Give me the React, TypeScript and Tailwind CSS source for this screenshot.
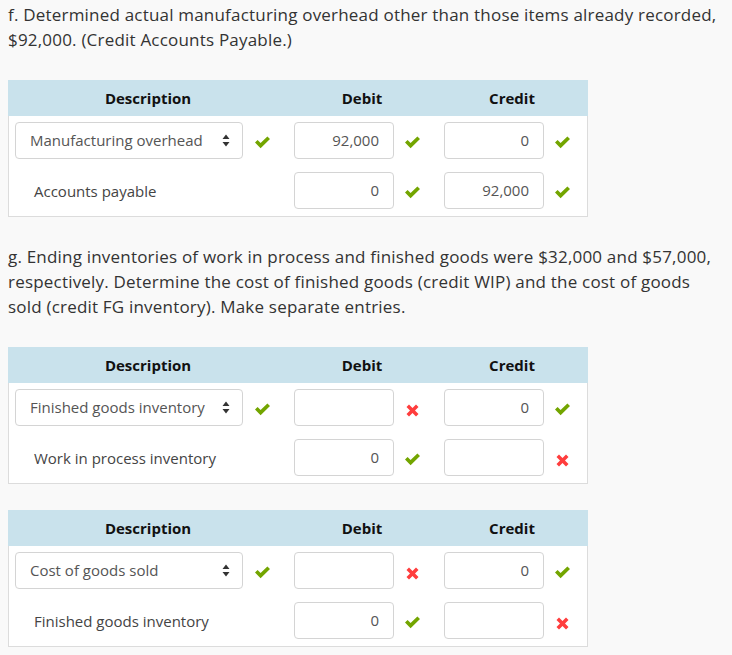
import React from "react";

const Check = () => (
  <svg width="17" height="13" viewBox="0 0 17 13" className="mt-[3px] shrink-0">
    <path d="M1 6.5 L3.6 4 L6.6 7 L13.4 0.5 L16 3 L6.6 12.2 Z" fill="#73a500" />
  </svg>
);

const Cross = () => (
  <svg width="13" height="13" viewBox="0 0 13 13" className="mt-[6px] shrink-0">
    <path
      d="M0.5 3 L3 0.5 L6.5 4 L10 0.5 L12.5 3 L9 6.5 L12.5 10 L10 12.5 L6.5 9 L3 12.5 L0.5 10 L4 6.5 Z"
      fill="#ff3d3d"
    />
  </svg>
);

const Mark = ({ ok }: { ok: boolean }) => (ok ? <Check /> : <Cross />);

const Amount = ({ value, ok }: { value: string; ok: boolean }) => (
  <div className="flex items-center pl-[7px]">
    <div className="w-[100px] h-[37px] border border-[#d4d4d4] rounded-[4px] bg-white flex items-center justify-end pr-[14px] text-[15px] text-[#555]">
      {value}
    </div>
    <div className="w-[17px] ml-[10px] flex justify-center">
      <Mark ok={ok} />
    </div>
  </div>
);

type Row = {
  desc: string;
  select: boolean;
  descOk?: boolean;
  debit: string;
  debitOk: boolean;
  credit: string;
  creditOk: boolean;
};

const Table = ({ rows }: { rows: Row[] }) => (
  <div className="w-[580px] bg-white border border-[#dcdcdc] border-t-0">
    <div className="grid grid-cols-[278px_150px_150px] h-[36px] bg-[#c9e2ec] items-center text-[15px] font-bold text-[#111] -mx-px px-px">
      <div className="text-center">Description</div>
      <div className="text-center">Debit</div>
      <div className="text-center">Credit</div>
    </div>
    <div className="flex flex-col gap-[13px] pt-[6px] pb-[7px]">
      {rows.map((r, i) => (
        <div key={i} className="grid grid-cols-[278px_150px_150px] h-[37px]">
          <div className="flex items-center pl-[6px]">
            {r.select ? (
              <>
                <div className="w-[228px] h-[37px] border border-[#d4d4d4] rounded-[4px] bg-white flex items-center justify-between pl-[14px] pr-[12px] text-[15px] text-[#555]">
                  <span>{r.desc}</span>
                  <svg width="8" height="13" viewBox="0 0 8 13">
                    <path d="M4 0.5 L7.5 5 L0.5 5 Z M4 12.5 L7.5 8 L0.5 8 Z" fill="#333" />
                  </svg>
                </div>
                <div className="ml-[11px]">
                  <Mark ok={!!r.descOk} />
                </div>
              </>
            ) : (
              <span className="pl-[19px] pt-[1px] text-[15px] text-[#444]">{r.desc}</span>
            )}
          </div>
          <Amount value={r.debit} ok={r.debitOk} />
          <Amount value={r.credit} ok={r.creditOk} />
        </div>
      ))}
    </div>
  </div>
);

export default function App() {
  return (
    <div
      className="min-h-[655px] bg-[#f9f9f9] px-2 text-[#333]"
      style={{ fontFamily: '"Open Sans", sans-serif' }}
    >
      <p className="pt-[2px] text-[17px] leading-[25px] tracking-[0.2px]">
        f. Determined actual manufacturing overhead other than those items already recorded, $92,000. (Credit Accounts Payable.)
      </p>
      <div className="mt-[28px]">
        <Table
          rows={[
            { desc: "Manufacturing overhead", select: true, descOk: true, debit: "92,000", debitOk: true, credit: "0", creditOk: true },
            { desc: "Accounts payable", select: false, debit: "0", debitOk: true, credit: "92,000", creditOk: true },
          ]}
        />
      </div>
      <p className="mt-[27px] text-[17px] leading-[25px] tracking-[0.2px]">
        g. Ending inventories of work in process and finished goods were $32,000 and $57,000, respectively. Determine the cost of finished goods (credit WIP) and the cost of goods sold (credit FG inventory). Make separate entries.
      </p>
      <div className="mt-[28px]">
        <Table
          rows={[
            { desc: "Finished goods inventory", select: true, descOk: true, debit: "", debitOk: false, credit: "0", creditOk: true },
            { desc: "Work in process inventory", select: false, debit: "0", debitOk: true, credit: "", creditOk: false },
          ]}
        />
      </div>
      <div className="mt-[26px]">
        <Table
          rows={[
            { desc: "Cost of goods sold", select: true, descOk: true, debit: "", debitOk: false, credit: "0", creditOk: true },
            { desc: "Finished goods inventory", select: false, debit: "0", debitOk: true, credit: "", creditOk: false },
          ]}
        />
      </div>
    </div>
  );
}
